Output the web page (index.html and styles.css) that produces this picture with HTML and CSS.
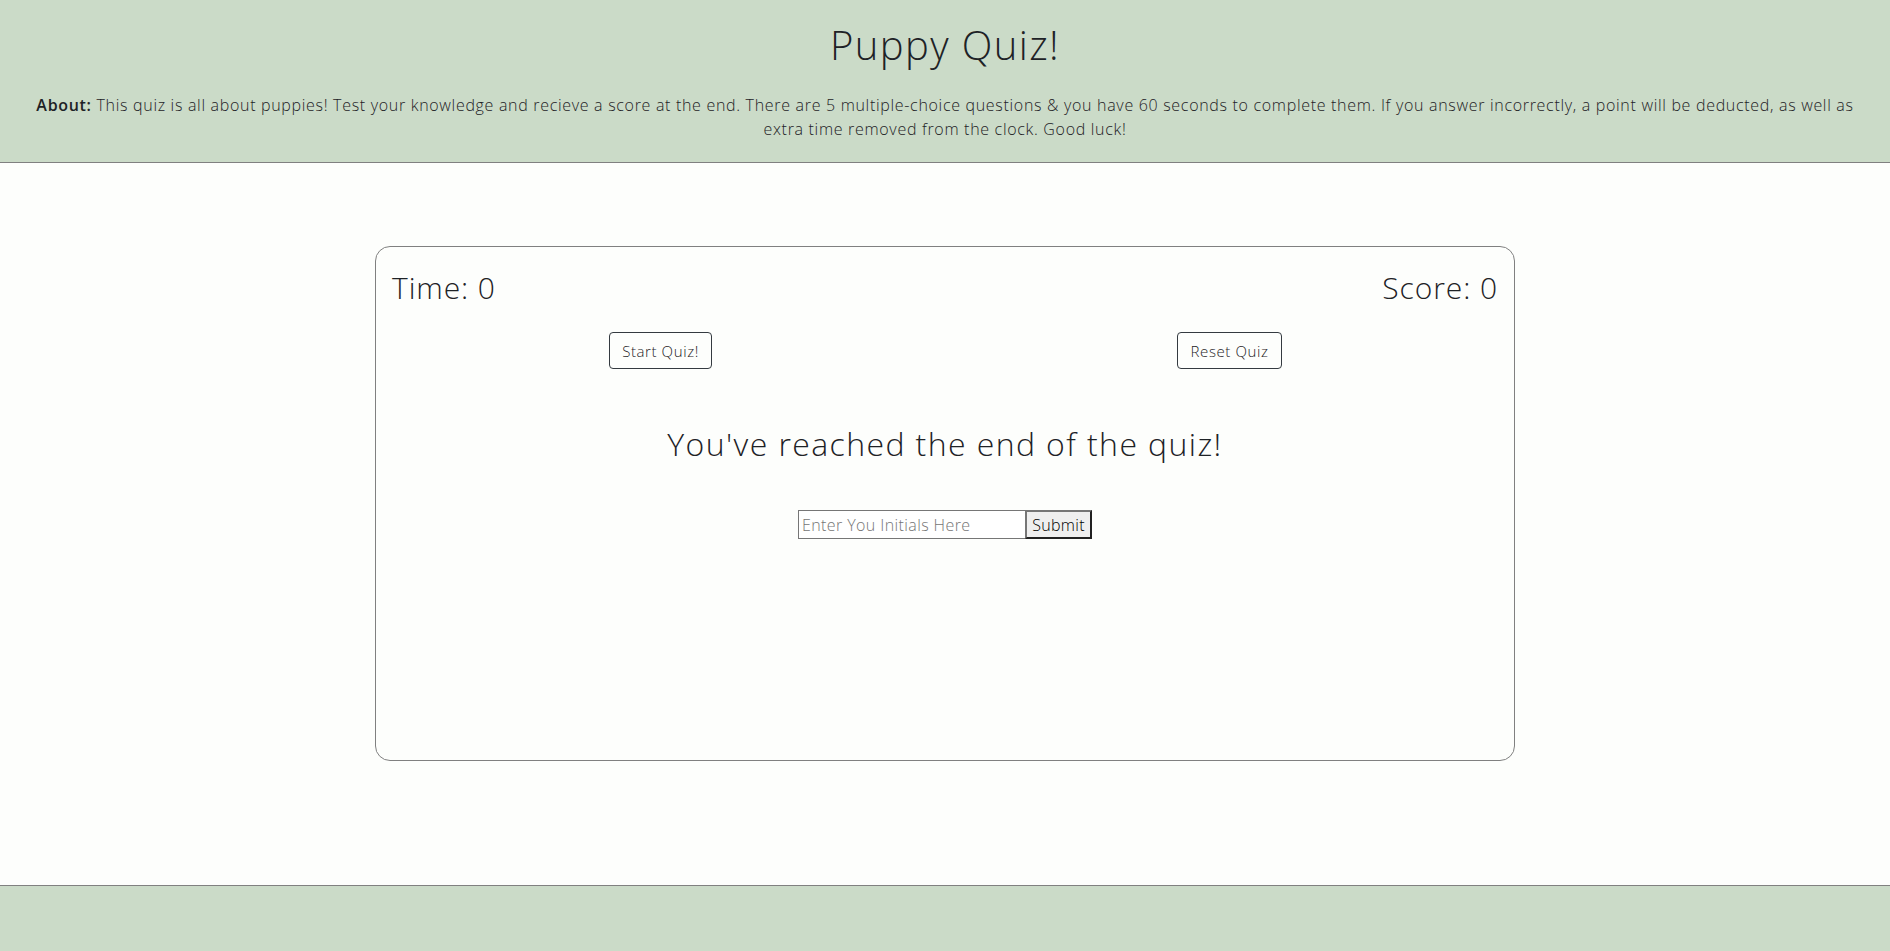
FILE: index.html
```html
<!DOCTYPE html>
<html lang="en">
<head>
<meta charset="utf-8">
<title>Puppy Quiz!</title>
<link rel="stylesheet" href="styles.css">
</head>
<body>
  <header class="site-header">
    <h1 class="title">Puppy Quiz!</h1>
    <p class="about"><strong>About:</strong> This quiz is all about puppies! Test your knowledge and recieve a score at the end. There are 5 multiple-choice questions &amp; you have 60 seconds to complete them. If you answer incorrectly, a point will be deducted, as well as extra time removed from the clock. Good luck!</p>
  </header>
  <main class="main">
    <section class="card">
      <div class="stats">
        <span class="stat">Time: 0</span>
        <span class="stat">Score: 0</span>
      </div>
      <div class="controls">
        <button class="ctrl-btn" type="button">Start Quiz!</button>
        <button class="ctrl-btn" type="button">Reset Quiz</button>
      </div>
      <h2 class="end-title">You've reached the end of the quiz!</h2>
      <form class="initials-form">
        <input class="initials" type="text" placeholder="Enter You Initials Here">
        <button class="submit" type="button">Submit</button>
      </form>
    </section>
  </main>
  <footer class="site-footer"></footer>
</body>
</html>
```

FILE: styles.css
```css
* { box-sizing: border-box; }

html, body {
  margin: 0;
  padding: 0;
}

body {
  font-family: "Open Sans", "Noto Sans", sans-serif;
  font-weight: 300;
  color: #1e2226;
  background: #fdfefc;
  min-height: 100vh;
  display: flex;
  flex-direction: column;
}

.site-header {
  background: #cbdbc8;
  border-bottom: 1px solid #808080;
  padding: 22px 32px 21px;
  text-align: center;
}

.title {
  margin: 0;
  font-size: 40px;
  line-height: 46px;
  font-weight: 300;
  letter-spacing: 1.4px;
}

.about {
  margin: 25px 0 0;
  font-size: 16px;
  line-height: 24px;
  letter-spacing: 0.69px;
}

.about strong { font-weight: 600; }

.main {
  flex: 1;
  display: flex;
  justify-content: center;
  align-items: flex-start;
  padding-top: 83px;
}

.card {
  width: 1140px;
  height: 515px;
  border: 1px solid #808080;
  border-radius: 15px;
  padding-top: 23px;
  display: flex;
  flex-direction: column;
}

.stats {
  display: flex;
  justify-content: space-between;
  padding: 0 16px;
  font-size: 30px;
  line-height: 36px;
  letter-spacing: 0.9px;
}

.controls {
  display: grid;
  grid-template-columns: 1fr 1fr;
  justify-items: center;
  margin-top: 26px;
}

.ctrl-btn {
  font-family: inherit;
  font-weight: 300;
  font-size: 15px;
  letter-spacing: 0.6px;
  color: #1e2226;
  height: 37px;
  padding: 0 12px;
  background: transparent;
  border: 1px solid #343a40;
  border-radius: 4px;
}

.ctrl-btn + .ctrl-btn { padding: 0 13px; }

.end-title {
  margin: 55px 0 0;
  text-align: center;
  font-size: 32px;
  line-height: 40px;
  font-weight: 300;
  letter-spacing: 1.4px;
}

.initials-form {
  margin-top: 46px;
  display: flex;
  justify-content: center;
}

.initials {
  width: 227px;
  height: 29px;
  margin: 0;
  padding: 0 3px;
  font-family: inherit;
  font-weight: 300;
  font-size: 16px;
  letter-spacing: 0.4px;
  border: 1px solid #767676;
  border-right: none;
  background: #fff;
}

.initials::placeholder { color: #757575; }

.submit {
  width: 67px;
  height: 29px;
  margin: 0;
  padding: 0;
  font-family: inherit;
  font-weight: 300;
  font-size: 16px;
  letter-spacing: 0.3px;
  color: #000;
  background: #efefef;
  border: 2px outset #767676;
}

.site-footer {
  height: 66px;
  background: #cbdbc8;
  border-top: 1px solid #808080;
}
```
